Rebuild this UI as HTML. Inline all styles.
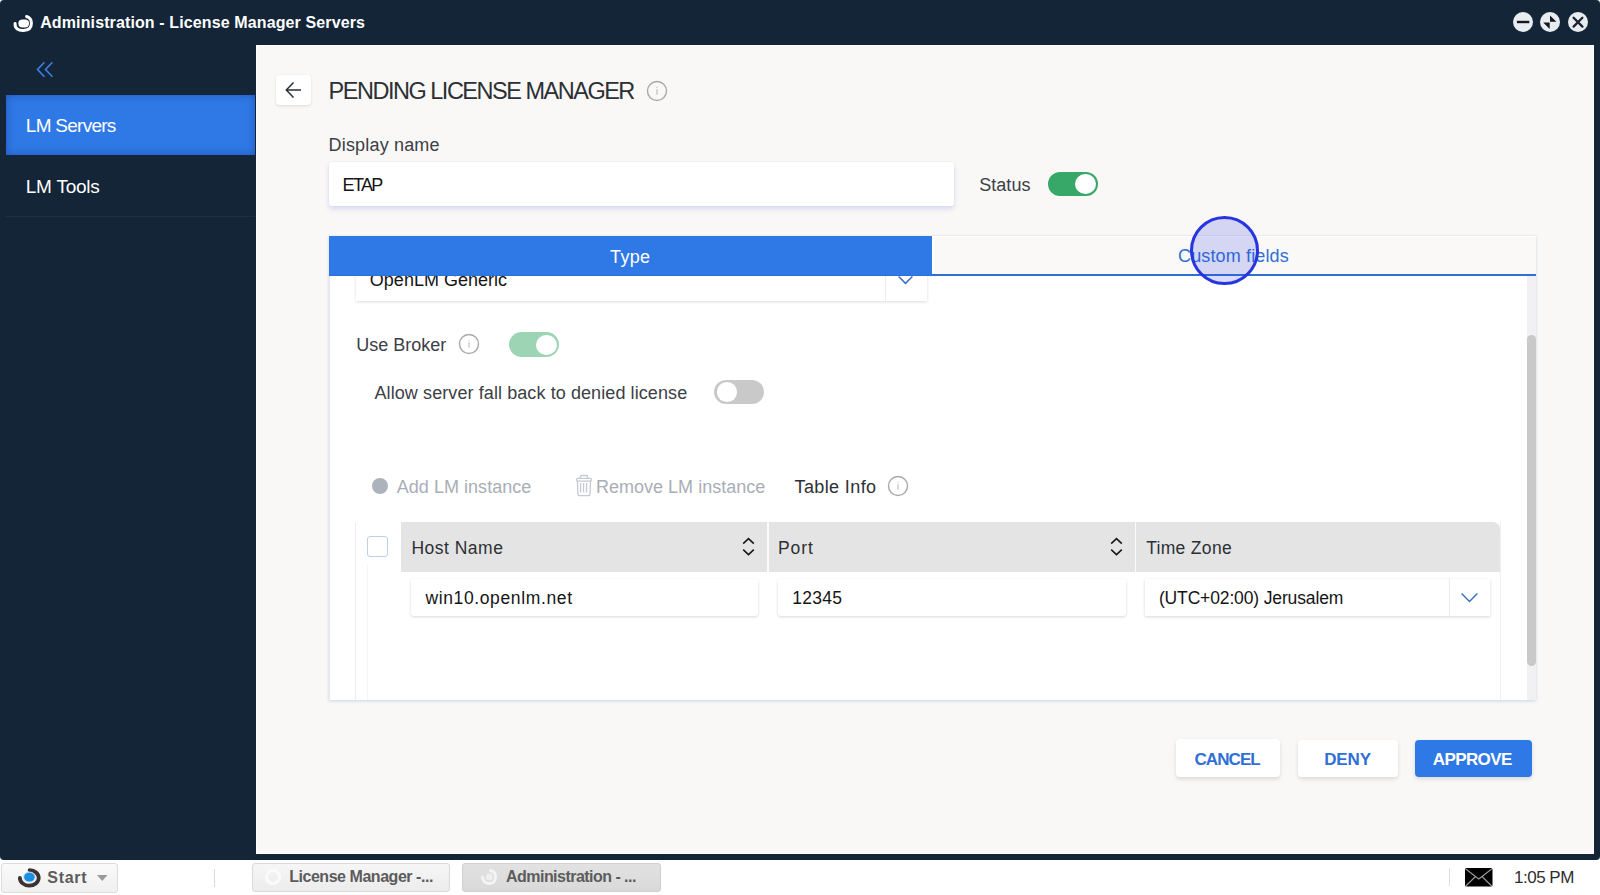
<!DOCTYPE html>
<html><head><meta charset="utf-8"><title>Administration - License Manager Servers</title>
<style>
*{box-sizing:border-box;margin:0;padding:0}
html,body{width:1600px;height:895px;overflow:hidden;background:#ffffff;font-family:"Liberation Sans",sans-serif}
.a{position:absolute}
.t{position:absolute;white-space:pre;font-family:"Liberation Sans",sans-serif}
</style></head>
<body>
<div class='a' style='left:0;top:0;width:1600px;height:860px;background:#132536;border-radius:4px'></div>
<svg class='a' style='left:10.5px;top:12.5px' width='24' height='20' viewBox='0 0 24 20'>
<path d='M4.1 10.4 C3.4 15.6 7.8 17.6 12.4 17.4 C17.6 17.2 20.4 14.4 20.4 10.2 C20.4 6.5 18.4 4.3 15.6 3.5' fill='none' stroke='#fff' stroke-width='3' stroke-linecap='round'/>
<rect x='7.4' y='6.4' width='10.6' height='8' rx='4' ry='3.6' fill='#fff'/>
</svg>
<div class='t' style='left:40.2px;top:15px;font-size:16.0px;line-height:16.0px;font-weight:700;letter-spacing:0.12px;color:#ffffff;'>Administration - License Manager Servers</div>
<svg class='a' style='left:1511.5px;top:11.4px' width='22' height='22' viewBox='0 0 22 22'><circle cx='11' cy='11' r='10' fill='#e9ecf1'/><rect x='4.9' y='9.8' width='12.4' height='2.4' fill='#121820'/></svg>
<svg class='a' style='left:1539px;top:11.4px' width='22' height='22' viewBox='0 0 22 22'><circle cx='11' cy='11' r='10' fill='#e9ecf1'/><path d='M11 4.4 L11 10.7 L17.4 10.7 Z M10.7 11.6 L4.2 11.6 L10.7 18.1 Z' fill='#121820'/></svg>
<svg class='a' style='left:1566.5px;top:11.4px' width='22' height='22' viewBox='0 0 22 22'><circle cx='11' cy='11' r='10' fill='#e9ecf1'/><path d='M6.6 6.8 L15.4 15.6 M15.4 6.8 L6.6 15.6' stroke='#1a2230' stroke-width='2.3' stroke-linecap='round'/></svg>
<svg class='a' style='left:35px;top:60px' width='20' height='19' viewBox='0 0 20 19'>
<path d='M9.5 2.3 L2.5 9.5 L9.5 16.7 M17.5 2.3 L10.5 9.5 L17.5 16.7' fill='none' stroke='#3f7fe8' stroke-width='1.6'/>
</svg>
<div class='a' style='left:6px;top:95px;width:249px;height:60px;background:#2f79e6;box-shadow:inset 0 0 9px rgba(15,45,130,0.45)'></div>
<div class='t' style='left:25.8px;top:116px;font-size:19.0px;line-height:19.0px;font-weight:400;letter-spacing:-0.73px;color:#ffffff;'>LM Servers</div>
<div class='t' style='left:25.8px;top:177px;font-size:19.0px;line-height:19.0px;font-weight:400;letter-spacing:-0.24px;color:#ffffff;'>LM Tools</div>
<div class='a' style='left:6px;top:216px;width:249px;height:1px;background:#1e2e44'></div>
<div class='a' style='left:256px;top:45px;width:1338px;height:809px;background:#f9f8f6;border:1px solid #fff'></div>
<div class='a' style='left:276px;top:75px;width:35px;height:30px;background:#fff;border-radius:4px;box-shadow:0 1px 3px rgba(0,0,0,0.12)'></div>
<svg class='a' style='left:284px;top:80px' width='20' height='20' viewBox='0 0 20 20'>
<path d='M17 10 L2.6 10 M9.5 2.5 L2.3 10 L9.5 17.5' fill='none' stroke='#2b3035' stroke-width='1.5'/>
</svg>
<div class='t' style='left:328.6px;top:80px;font-size:23.5px;line-height:23.5px;font-weight:400;letter-spacing:-1.49px;color:#2b3035;'>PENDING LICENSE MANAGER</div>
<svg class='a' style='left:646px;top:79.6px' width='22' height='22' viewBox='0 0 22 22'><circle cx='11' cy='11' r='9.5' fill='none' stroke='#a9a9a9' stroke-width='1.4'/><rect x='10.45' y='9.2' width='1.1' height='5.4' fill='#b9b9b9'/><rect x='10.45' y='6.8' width='1.1' height='1.1' fill='#c4c4c4'/></svg>
<div class='t' style='left:328.6px;top:136px;font-size:18.0px;line-height:18.0px;font-weight:400;letter-spacing:0.17px;color:#3b4046;'>Display name</div>
<div class='a' style='left:329px;top:162px;width:625px;height:43.5px;background:#fff;border-radius:3px;box-shadow:0 3px 5px rgba(70,100,220,0.2),0 0 2px rgba(0,0,0,0.06)'></div>
<div class='t' style='left:342.6px;top:176px;font-size:18.0px;line-height:18.0px;font-weight:400;letter-spacing:-1.67px;color:#151515;'>ETAP</div>
<div class='t' style='left:979.3px;top:176px;font-size:18.0px;line-height:18.0px;font-weight:400;letter-spacing:0.02px;color:#3b4046;'>Status</div>
<div class='a' style='left:1048px;top:171.5px;width:50px;height:24.5px;background:#38a869;border-radius:13px'></div>
<div class='a' style='left:1075px;top:174px;width:20.5px;height:20px;background:#fff;border-radius:50%'></div>
<div class='a' style='left:329px;top:236px;width:1207px;height:464px;background:#fff;box-shadow:0 1px 3px rgba(70,100,210,0.25);border-left:1px solid #e3e8f5'></div>
<div class='a' style='left:932px;top:236px;width:604px;height:38px;background:#faf9f7;border-left:2px solid #fff;border-top:1.5px solid #fff;box-shadow:0 -1px 1px rgba(0,0,0,0.025)'></div>
<div class='a' style='left:932px;top:273.5px;width:604px;height:2px;background:#2e6fd9'></div>
<div class='t' style='left:1178.1px;top:247px;font-size:18.0px;line-height:18.0px;font-weight:400;letter-spacing:0.13px;color:#2f6fd6;'>Custom fields</div>
<div class='a' style='left:356px;top:256px;width:571px;height:44.5px;background:#fff;box-shadow:0 1px 3px rgba(0,0,0,0.14)'></div>
<div class='a' style='left:885px;top:256px;width:1px;height:44.5px;background:#ececec'></div>
<div class='t' style='left:369.8px;top:271px;font-size:18.0px;line-height:18.0px;font-weight:400;letter-spacing:0.02px;color:#151515;'>OpenLM Generic</div>
<svg class='a' style='left:897px;top:270px' width='17' height='16' viewBox='0 0 17 16'>
<path d='M1.6 6.5 L8.5 13.4 L15.4 6.5' fill='none' stroke='#3a6fc8' stroke-width='1.5'/>
</svg>
<div class='a' style='left:329px;top:236px;width:603px;height:39.5px;background:#2f79e6;border-bottom:1.5px solid #2b6fd8'></div>
<div class='t' style='left:610.1px;top:248px;font-size:18.0px;line-height:18.0px;font-weight:400;letter-spacing:0.33px;color:#ffffff;'>Type</div>
<div class='t' style='left:356.2px;top:336px;font-size:18.0px;line-height:18.0px;font-weight:400;letter-spacing:0.01px;color:#3b4046;'>Use Broker</div>
<svg class='a' style='left:458px;top:332.7px' width='22' height='22' viewBox='0 0 22 22'><circle cx='11' cy='11' r='9.5' fill='none' stroke='#a9a9a9' stroke-width='1.4'/><rect x='10.45' y='9.2' width='1.1' height='5.4' fill='#b9b9b9'/><rect x='10.45' y='6.8' width='1.1' height='1.1' fill='#c4c4c4'/></svg>
<div class='a' style='left:509px;top:332px;width:50px;height:24.5px;background:#9dd5b4;border-radius:13px'></div>
<div class='a' style='left:536px;top:334.5px;width:20.5px;height:20px;background:#fff;border-radius:50%'></div>
<div class='t' style='left:374.5px;top:384px;font-size:18.0px;line-height:18.0px;font-weight:400;letter-spacing:0.09px;color:#3b4046;'>Allow server fall back to denied license</div>
<div class='a' style='left:714px;top:379.5px;width:50px;height:24.5px;background:#c9c9c9;border-radius:13px'></div>
<div class='a' style='left:716.5px;top:382px;width:20.5px;height:20px;background:#fff;border-radius:50%'></div>
<div class='a' style='left:372px;top:478.2px;width:16px;height:16px;background:#adb3bd;border-radius:50%'></div>
<div class='t' style='left:396.7px;top:478px;font-size:18.0px;line-height:18.0px;font-weight:400;letter-spacing:0.04px;color:#a9aeb6;'>Add LM instance</div>
<svg class='a' style='left:575px;top:474px' width='18' height='23' viewBox='0 0 18 23'>
<g fill='none' stroke='#c6c9ce' stroke-width='1.3'>
<path d='M5.2 4.2 V2.9 Q5.2 1.5 6.6 1.5 H11.3 Q12.7 1.5 12.7 2.9 V4.2'/>
<rect x='1.5' y='4.3' width='15' height='2.8' rx='1.3'/>
<path d='M2.4 7.1 L2.9 20.1 Q3 21.7 4.5 21.7 H13.4 Q14.9 21.7 15 20.1 L15.5 7.1'/>
<path d='M5.6 9 V18.6 M8.6 9 V18.6 M11.6 9 V18.6'/>
</g></svg>
<div class='t' style='left:596.0px;top:478px;font-size:18.0px;line-height:18.0px;font-weight:400;letter-spacing:0.01px;color:#a9aeb6;'>Remove LM instance</div>
<div class='t' style='left:794.5px;top:478px;font-size:18.0px;line-height:18.0px;font-weight:400;letter-spacing:0.39px;color:#2b3035;'>Table Info</div>
<svg class='a' style='left:887px;top:475px' width='22' height='22' viewBox='0 0 22 22'><circle cx='11' cy='11' r='9.5' fill='none' stroke='#a9a9a9' stroke-width='1.4'/><rect x='10.45' y='9.2' width='1.1' height='5.4' fill='#b9b9b9'/><rect x='10.45' y='6.8' width='1.1' height='1.1' fill='#c4c4c4'/></svg>
<div class='a' style='left:355px;top:522px;width:1px;height:178px;background:#eceef5'></div>
<div class='a' style='left:367px;top:565px;width:1px;height:135px;background:#f4f5f9'></div>
<div class='a' style='left:1500px;top:522px;width:1px;height:178px;background:#eef0f6'></div>
<div class='a' style='left:366.5px;top:536px;width:21px;height:21px;background:#fff;border:1.5px solid #bcd1ee;border-radius:3px'></div>
<div class='a' style='left:401px;top:522px;width:1099px;height:50px;background:#e4e4e4;border-radius:0 7px 0 0'></div>
<div class='a' style='left:767px;top:522px;width:1.5px;height:50px;background:#fafafa'></div>
<div class='a' style='left:1134.5px;top:522px;width:1.5px;height:50px;background:#fafafa'></div>
<div class='t' style='left:411.4px;top:540px;font-size:17.5px;line-height:17.5px;font-weight:400;letter-spacing:0.5px;color:#2b3035;'>Host Name</div>
<div class='t' style='left:778.0px;top:540px;font-size:17.5px;line-height:17.5px;font-weight:400;letter-spacing:0.9px;color:#2b3035;'>Port</div>
<div class='t' style='left:1146.2px;top:540px;font-size:17.5px;line-height:17.5px;font-weight:400;letter-spacing:0.31px;color:#2b3035;'>Time Zone</div>
<svg class='a' style='left:742px;top:536px' width='13' height='21' viewBox='0 0 13 21'><path d='M1.2 7.6 L6.5 2.6 L11.8 7.6 M1.2 13.6 L6.5 18.6 L11.8 13.6' fill='none' stroke='#151515' stroke-width='1.5'/></svg>
<svg class='a' style='left:1110px;top:536px' width='13' height='21' viewBox='0 0 13 21'><path d='M1.2 7.6 L6.5 2.6 L11.8 7.6 M1.2 13.6 L6.5 18.6 L11.8 13.6' fill='none' stroke='#151515' stroke-width='1.5'/></svg>
<div class='a' style='left:410.5px;top:579px;width:347.5px;height:37px;background:#fff;border-radius:3px;box-shadow:0 1px 3px rgba(0,0,0,0.16)'></div>
<div class='a' style='left:778px;top:579px;width:348px;height:37px;background:#fff;border-radius:3px;box-shadow:0 1px 3px rgba(0,0,0,0.16)'></div>
<div class='a' style='left:1144.5px;top:579px;width:345.5px;height:37px;background:#fff;box-shadow:0 1px 3px rgba(0,0,0,0.16)'></div>
<div class='a' style='left:1449px;top:579px;width:1px;height:37px;background:#ececec'></div>
<div class='t' style='left:425.4px;top:590px;font-size:17.5px;line-height:17.5px;font-weight:400;letter-spacing:0.63px;color:#151515;'>win10.openlm.net</div>
<div class='t' style='left:792.3px;top:590px;font-size:17.5px;line-height:17.5px;font-weight:400;letter-spacing:0.23px;color:#151515;'>12345</div>
<div class='t' style='left:1158.9px;top:590px;font-size:17.5px;line-height:17.5px;font-weight:400;letter-spacing:-0.14px;color:#151515;'>(UTC+02:00) Jerusalem</div>
<svg class='a' style='left:1460px;top:590px' width='19' height='15' viewBox='0 0 19 15'>
<path d='M1.6 3.5 L9.5 11.5 L17.4 3.5' fill='none' stroke='#3a6fc8' stroke-width='1.5'/>
</svg>
<div class='a' style='left:1526.5px;top:276px;width:9px;height:424px;background:#f1f1f3'></div>
<div class='a' style='left:1526.5px;top:335px;width:9px;height:330.5px;background:#c9c9c9;border-radius:4.5px'></div>
<div class='a' style='left:1189.5px;top:216px;width:69px;height:69px;border:3.8px solid #2834e0;border-radius:50%;background:rgba(50,65,230,0.19)'></div>
<div class='a' style='left:1176px;top:739px;width:104px;height:38px;background:#fff;border-radius:4px;box-shadow:0 2px 4px rgba(0,0,0,0.13)'></div>
<div class='t' style='left:1194.5px;top:751px;font-size:17.0px;line-height:17.0px;font-weight:700;letter-spacing:-0.92px;color:#2f6fd6;'>CANCEL</div>
<div class='a' style='left:1297.5px;top:739.5px;width:100px;height:37px;background:#fff;border-radius:4px;box-shadow:0 2px 4px rgba(0,0,0,0.13)'></div>
<div class='t' style='left:1324.2px;top:751px;font-size:17.0px;line-height:17.0px;font-weight:700;letter-spacing:-0.13px;color:#2f6fd6;'>DENY</div>
<div class='a' style='left:1415px;top:739.5px;width:116.5px;height:37px;background:#2f79e6;border-radius:4px;box-shadow:0 2px 4px rgba(0,0,0,0.13)'></div>
<div class='t' style='left:1432.75px;top:751px;font-size:17.0px;line-height:17.0px;font-weight:700;letter-spacing:-0.59px;color:#ffffff;'>APPROVE</div>
<div class='a' style='left:1px;top:863px;width:117px;height:30px;border-radius:3px;border:1px solid #dcdcdc;background:linear-gradient(#fafafa,#f0f0f0)'></div>
<svg class='a' style='left:16px;top:866px' width='27' height='24' viewBox='0 0 27 24'>
<path d='M13.6 4.1 A9.4 7.8 0 1 1 3.9 11.9' fill='none' stroke='#3a3330' stroke-width='3.8' stroke-linecap='round'/>
<ellipse cx='13.4' cy='11.1' rx='5.8' ry='5' fill='#1b8fe2' stroke='#cfe6fb' stroke-width='1'/>
</svg>
<div class='t' style='left:47.3px;top:870px;font-size:16.0px;line-height:16.0px;font-weight:700;letter-spacing:0.68px;color:#5c5c5c;'>Start</div>
<svg class='a' style='left:97px;top:875px' width='11' height='6' viewBox='0 0 11 6'><path d='M0 0 H10.5 L5.25 6 Z' fill='#999'/></svg>
<div class='a' style='left:214px;top:869px;width:1px;height:18px;background:#d8d8d8'></div>
<div class='a' style='left:252px;top:863px;width:198px;height:28.5px;border-radius:3px;border:1px solid #d9d9d9;background:linear-gradient(#f6f6f6,#ececec)'></div>
<svg class='a' style='left:263px;top:867px' width='20' height='20' viewBox='0 0 20 20'><circle cx='10' cy='10' r='6.5' fill='none' stroke='#fbfbfb' stroke-width='3'/></svg>
<div class='t' style='left:289.2px;top:869px;font-size:16.0px;line-height:16.0px;font-weight:700;letter-spacing:-0.46px;color:#5c5c5c;'>License Manager -...</div>
<div class='a' style='left:461.5px;top:863px;width:199.5px;height:28.5px;border-radius:3px;border:1px solid #cfcfcf;background:linear-gradient(#e2e2e2,#d9d9d9)'></div>
<svg class='a' style='left:479px;top:867px' width='20' height='20' viewBox='0 0 20 20'><path d='M3.5 10 C3.5 14.5 7 16.5 10.5 16.5 C14.5 16.5 16.5 13.5 16.5 10 C16.5 6.5 14.5 4 11.5 3.5' fill='none' stroke='#f4f4f4' stroke-width='3' stroke-linecap='round'/><circle cx='10.3' cy='10' r='3.5' fill='#efefef'/></svg>
<div class='t' style='left:506.0px;top:869px;font-size:16.0px;line-height:16.0px;font-weight:700;letter-spacing:-0.53px;color:#5c5c5c;'>Administration - ...</div>
<div class='a' style='left:1449px;top:868px;width:1px;height:18px;background:#dedede'></div>
<svg class='a' style='left:1465px;top:868px' width='28' height='19' viewBox='0 0 28 19'>
<rect x='0' y='0' width='27.5' height='18.5' rx='1.5' fill='#000'/>
<path d='M0.8 1 L13.75 11 L26.7 1 M0.8 18 L10.5 8.5 M26.7 18 L17 8.5' fill='none' stroke='#9a9a9a' stroke-width='1.1'/>
</svg>
<div class='t' style='left:1514.0px;top:869px;font-size:17.0px;line-height:17.0px;font-weight:400;letter-spacing:-0.5px;color:#2e2e2e;'>1:05 PM</div>
</body></html>
